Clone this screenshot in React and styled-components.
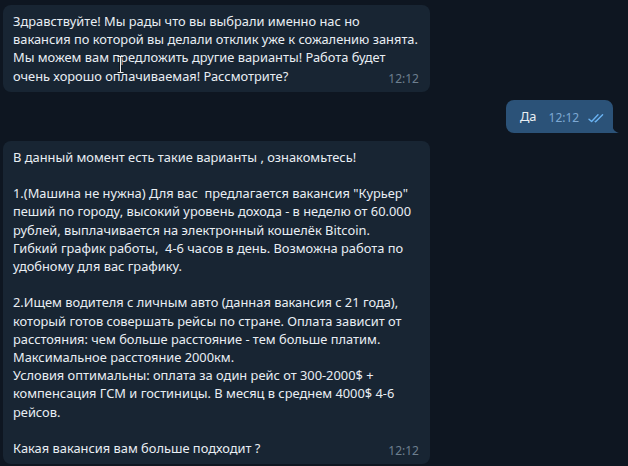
import React from "react";
import styled, { createGlobalStyle } from "styled-components";

const Global = createGlobalStyle`
  html, body { margin: 0; padding: 0; background: #0e1621; }
  body { font-family: "Noto Sans", "Open Sans", sans-serif; }
`;

const Page = styled.div`
  width: 628px;
  height: 466px;
  box-sizing: border-box;
  padding: 5px 15px 0 3px;
  display: flex;
  flex-direction: column;
  gap: 8px;
  background: #0e1621;
  overflow: hidden;
`;

const Row = styled.div`
  display: flex;
  justify-content: ${(p) => (p.$out ? "flex-end" : "flex-start")};
  margin-top: ${(p) => p.$mt || "0"};
`;

const Bubble = styled.div`
  position: relative;
  box-sizing: border-box;
  width: ${(p) => p.$w || "auto"};
  height: ${(p) => p.$h || "auto"};
  padding: ${(p) => (p.$out ? "0 9px 0 14px" : "7px 10px 7px 10px")};
  background: ${(p) => (p.$out ? "#2b5278" : "#182533")};
  border-radius: ${(p) => (p.$out ? "8px 8px 0 8px" : "8px")};
  color: #e9eef3;
  font-size: 12.85px;
  line-height: 18.2px;
  white-space: nowrap;
  display: ${(p) => (p.$out ? "flex" : "block")};
  align-items: center;
`;

const Tail = styled.svg`
  position: absolute;
  right: -6px;
  bottom: 0;
`;

const Text = styled.div`
  white-space: nowrap;
`;

const Time = styled.span`
  position: absolute;
  right: 11px;
  bottom: 4px;
  font-size: 12px;
  color: #6d7f8f;
`;

const OutLine = styled.div`
  display: flex;
  align-items: center;
  gap: 12px;
`;

const OutTime = styled.span`
  font-size: 12px;
  color: #7da8d3;
  display: flex;
  align-items: center;
  gap: 9px;
  margin-top: 3px;
`;

const Cursor = styled.svg`
  position: absolute;
  left: 114px;
  top: 51px;
`;

function Checks() {
  return (
    <svg width="17" height="10" viewBox="0 0 17 10">
      <path d="M1 6.2 L3.6 8.6 L10 1.8" fill="none" stroke="#6ab3f3" strokeWidth="1.4" strokeLinecap="round" strokeLinejoin="round" />
      <path d="M7.2 8.4 L7.6 8.7 L14.6 1.8" fill="none" stroke="#6ab3f3" strokeWidth="1.4" strokeLinecap="round" strokeLinejoin="round" />
    </svg>
  );
}

export default function App() {
  return (
    <>
      <Global />
      <Page>
        <Row>
          <Bubble $w="427px">
            <Text>
              Здравствуйте! Мы рады что вы выбрали именно нас но
              <br />
              вакансия по которой вы делали отклик уже к сожалению занята.
              <br />
              Мы можем вам предложить другие варианты! Работа будет
              <br />
              очень хорошо оплачиваемая! Рассмотрите?
            </Text>
            <Time>12:12</Time>
            <Cursor width="7" height="17" viewBox="0 0 7 17">
              <path d="M0.5 0.5 H6.5 M3.5 0.5 V16.5 M0.5 16.5 H6.5" stroke="#111" strokeWidth="2" fill="none" />
              <path d="M0.5 0.5 H6.5 M3.5 0.5 V16.5 M0.5 16.5 H6.5" stroke="#eee" strokeWidth="1" fill="none" />
            </Cursor>
          </Bubble>
        </Row>
        <Row $out>
          <Bubble $out $w="107px" $h="33px">
            <OutLine>
              <span>Да</span>
              <OutTime>
                12:12
                <Checks />
              </OutTime>
            </OutLine>
            <Tail width="7" height="10" viewBox="0 0 7 10">
              <path d="M0 0 C0 6 3 9 7 10 H0 Z" fill="#2b5278" />
            </Tail>
          </Bubble>
        </Row>
        <Row>
          <Bubble $w="427px">
            <Text>
              В данный момент есть такие варианты , ознакомьтесь!
              <br />
              <br />
              1.(Машина не нужна) Для вас&nbsp; предлагается вакансия "Курьер"
              <br />
              пеший по городу, высокий уровень дохода - в неделю от 60.000
              <br />
              рублей, выплачивается на электронный кошелёк Bitcoin.
              <br />
              Гибкий график работы,&nbsp; 4-6 часов в день. Возможна работа по
              <br />
              удобному для вас графику.
              <br />
              <br />
              2.Ищем водителя с личным авто (данная вакансия с 21 года),
              <br />
              который готов совершать рейсы по стране. Оплата зависит от
              <br />
              расстояния: чем больше расстояние - тем больше платим.
              <br />
              Максимальное расстояние 2000км.
              <br />
              Условия оптимальны: оплата за один рейс от 300-2000$ +
              <br />
              компенсация ГСМ и гостиницы. В месяц в среднем 4000$ 4-6
              <br />
              рейсов.
              <br />
              <br />
              Какая вакансия вам больше подходит ?
            </Text>
            <Time>12:12</Time>
          </Bubble>
        </Row>
      </Page>
    </>
  );
}
